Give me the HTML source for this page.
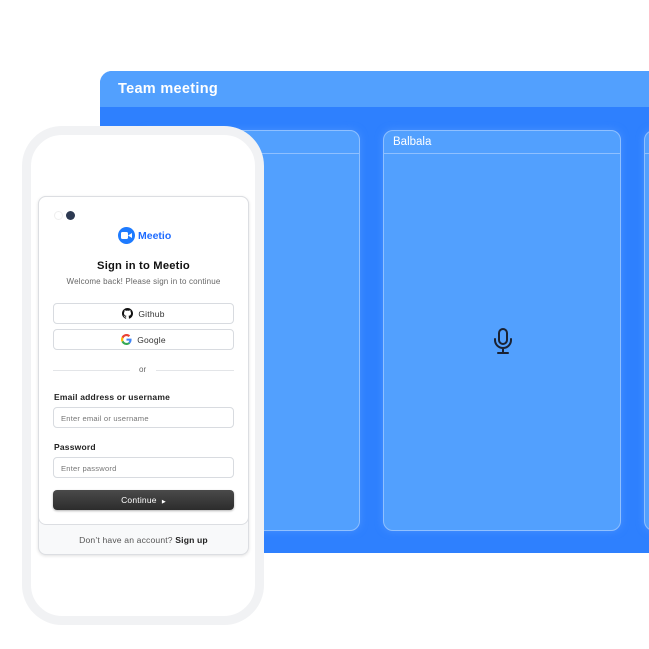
<!DOCTYPE html>
<html><head><meta charset="utf-8"><style>
*{margin:0;padding:0;box-sizing:border-box}
body{width:649px;height:649px;background:#fff;position:relative;overflow:hidden;font-family:"Liberation Sans",sans-serif}
.abs{position:absolute}
.win{left:100px;top:71px;width:600px;height:482px;background:#2e80fe;border-radius:12px 0 0 6px;overflow:hidden}
.wh{left:0;top:0;width:600px;height:36px;background:#52a0fe}
.wh span{position:absolute;left:18px;top:10px;color:#fff;font-weight:bold;font-size:14.5px;letter-spacing:.3px}
.tile{background:#52a0fe;border:1px solid #8fc0ff;border-radius:10px;box-shadow:0 0 8px rgba(80,150,255,.8)}
.tile .hd{position:absolute;left:0;right:0;top:22px;border-top:1px solid #8fc0ff}
.tile .nm{position:absolute;left:9px;top:5px;color:#fff;font-size:11.5px}
.phone{left:22px;top:126px;width:242px;height:499px;background:#fff;border:9px solid #f1f2f4;border-radius:40px}
.card{left:38px;top:196px;width:211px;height:359px;background:#f8f9fa;border:1px solid #dcdee2;border-radius:8px;box-shadow:0 1px 3px rgba(0,0,0,.12)}
.cin{left:-1px;top:-1px;width:211px;height:329px;background:#fff;border:1px solid #dcdee2;border-radius:8px}
.btn{left:53px;width:181px;height:21px;border:1px solid #d8dbe0;border-radius:4px;background:#fff;font-size:8.5px;color:#333;display:flex;align-items:center;justify-content:center;gap:5px;letter-spacing:.2px}
.lbl{left:54px;font-size:8.5px;font-weight:bold;color:#222;letter-spacing:.2px}
.inp{left:53px;width:181px;height:21px;border:1px solid #d8dbe0;border-radius:4px;font-size:7.6px;color:#777;padding:6px 0 0 7px;letter-spacing:.2px}
</style></head><body>
<div class="abs win">
 <div class="abs wh"><span>Team meeting</span></div>
 <div class="abs tile" style="left:40px;top:59px;width:220px;height:401px"><div class="hd"></div></div>
 <div class="abs tile" style="left:283px;top:59px;width:238px;height:401px"><div class="hd"></div><div class="nm">Balbala</div>
  <svg class="abs" style="left:108px;top:197px" width="22" height="28" viewBox="0 0 22 28" fill="none" stroke="#1a2233" stroke-width="2" stroke-linecap="round"><rect x="7" y="1" width="8" height="15" rx="4"/><path d="M3 11v1a8 8 0 0 0 16 0v-1M11 20v4M6 25h10"/></svg>
 </div>
 <div class="abs tile" style="left:544px;top:59px;width:60px;height:401px"><div class="hd"></div></div>
</div>
<div class="abs phone"></div>
<div class="abs card">
 <div class="abs cin"></div>
</div>
<div class="abs" style="left:54px;top:211px;width:9px;height:9px;border-radius:50%;border:1px solid #eee;background:#fff"></div>
<div class="abs" style="left:66px;top:211px;width:9px;height:9px;border-radius:50%;background:#2d3a52"></div>
<div class="abs" style="left:118px;top:227px;width:17px;height:17px;border-radius:50%;background:#1e7bff"></div>
<svg class="abs" style="left:121px;top:232px" width="11" height="7" viewBox="0 0 11 7"><rect x="0" y="0" width="7" height="7" rx="1.5" fill="#fff"/><path d="M7 3.5L11 1v5z" fill="#fff"/></svg>
<div class="abs" style="left:138px;top:230px;font-size:10.5px;font-weight:bold;color:#1e6bff">Meetio</div>
<div class="abs" style="left:38px;width:211px;top:260px;text-align:center;font-size:11.2px;font-weight:bold;color:#111;letter-spacing:.2px">Sign in to Meetio</div>
<div class="abs" style="left:38px;width:211px;top:277px;text-align:center;font-size:8px;color:#666;letter-spacing:.15px">Welcome back! Please sign in to continue</div>
<div class="abs btn" style="top:303px"><svg width="11" height="11" viewBox="0 0 16 16"><path fill="#111" d="M8 0C3.6 0 0 3.6 0 8c0 3.5 2.3 6.5 5.5 7.6.4.1.5-.2.5-.4v-1.4c-2.2.5-2.7-1-2.7-1-.4-.9-.9-1.200-.9-1.2-.7-.5.1-.5.1-.5.8.1 1.2.8 1.2.8.7 1.2 1.9.9 2.3.7.1-.5.3-.9.5-1.1-1.8-.2-3.6-.9-3.6-4 0-.9.3-1.6.8-2.1-.1-.2-.4-1 .1-2.1 0 0 .7-.2 2.2.8.6-.2 1.3-.3 2-.3s1.4.1 2 .3c1.5-1 2.2-.8 2.2-.8.4 1.1.2 1.9.1 2.1.5.6.8 1.3.8 2.1 0 3.1-1.9 3.7-3.6 3.9.3.3.5.8.5 1.5v2.2c0 .2.1.5.6.4C13.7 14.5 16 11.5 16 8c0-4.4-3.6-8-8-8z"/></svg>Github</div>
<div class="abs btn" style="top:329px"><svg width="11" height="11" viewBox="0 0 48 48"><path fill="#EA4335" d="M24 9.5c3.5 0 6.6 1.2 9.1 3.6l6.8-6.8C35.8 2.4 30.3 0 24 0 14.6 0 6.6 5.4 2.7 13.3l7.9 6.2C12.5 13.6 17.8 9.5 24 9.5z"/><path fill="#4285F4" d="M46.1 24.5c0-1.6-.1-3.1-.4-4.5H24v9h12.4c-.5 2.9-2.2 5.3-4.6 7l7.3 5.7c4.3-4 7-9.9 7-17.2z"/><path fill="#FBBC05" d="M10.5 28.6c-.5-1.4-.8-3-.8-4.6s.3-3.200.8-4.6l-7.9-6.2C1 16.5 0 20.1 0 24s1 7.5 2.7 10.8l7.8-6.2z"/><path fill="#34A853" d="M24 48c6.5 0 11.9-2.1 15.9-5.8l-7.3-5.7c-2.1 1.4-4.8 2.3-8.6 2.3-6.2 0-11.5-4.2-13.4-9.9l-7.9 6.2C6.6 42.6 14.6 48 24 48z"/></svg>Google</div>
<div class="abs" style="left:53px;top:370px;width:77px;border-top:1px solid #e3e5e8"></div>
<div class="abs" style="left:156px;top:370px;width:78px;border-top:1px solid #e3e5e8"></div>
<div class="abs" style="left:139px;top:365px;font-size:8px;color:#666">or</div>
<div class="abs lbl" style="top:392px">Email address or username</div>
<div class="abs inp" style="top:407px">Enter email or username</div>
<div class="abs lbl" style="top:442px">Password</div>
<div class="abs inp" style="top:457px">Enter password</div>
<div class="abs" style="left:53px;top:490px;width:181px;height:20px;border-radius:4px;background:linear-gradient(#4a4a4a,#2c2c2c);color:#fff;font-size:8.5px;text-align:center;line-height:20px;box-shadow:0 1px 2px rgba(0,0,0,.3);letter-spacing:.2px">Continue &nbsp;<span style="font-size:5px">▶</span></div>
<div class="abs" style="left:38px;width:211px;top:535px;text-align:center;font-size:8.6px;color:#555;letter-spacing:.15px">Don’t have an account? <b style="color:#222">Sign up</b></div>
</body></html>
